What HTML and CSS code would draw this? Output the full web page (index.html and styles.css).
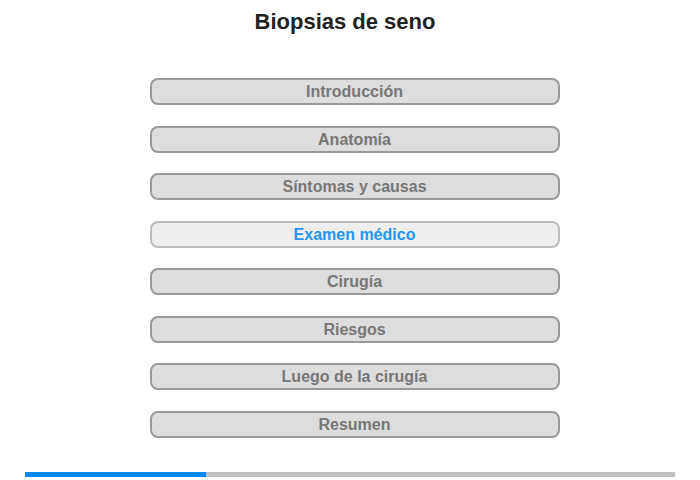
FILE: index.html
```html
<!DOCTYPE html>
<html lang="es">
<head>
    <meta charset="UTF-8">
    <meta name="viewport" content="width=device-width, initial-scale=1.0">
    <title>Biopsias de seno</title>
    <link rel="stylesheet" href="styles.css">
</head>
<body>
    <div class="page">
        <h1 class="title">Biopsias de seno</h1>
        <div class="menu">
            <div class="menu-item">Introducción</div>
            <div class="menu-item">Anatomía</div>
            <div class="menu-item">Síntomas y causas</div>
            <div class="menu-item active">Examen médico</div>
            <div class="menu-item">Cirugía</div>
            <div class="menu-item">Riesgos</div>
            <div class="menu-item">Luego de la cirugía</div>
            <div class="menu-item">Resumen</div>
        </div>
        <div class="progress">
            <div class="progress-fill" style="width: 181px;"></div>
        </div>
    </div>
</body>
</html>
```

FILE: styles.css
```css
body {
    margin: 0;
    padding: 0;
    font-family: "Liberation Sans", Arial, sans-serif;
    background: #fff;
}
.page {
    width: 700px;
    height: 480px;
    display: flex;
    flex-direction: column;
    align-items: center;
}
.title {
    margin: 0 10px 0 0;
    padding-top: 9px;
    font-size: 22px;
    line-height: 26px;
    font-weight: bold;
    color: #222;
}
.menu {
    margin: 43px 0 0 9px;
    display: flex;
    flex-direction: column;
    gap: 20.5px;
}
.menu-item {
    box-sizing: border-box;
    width: 410px;
    height: 27px;
    border: 2px solid #999;
    border-radius: 8px;
    background-color: #ddd;
    color: #777;
    font-size: 16px;
    font-weight: bold;
    line-height: 23px;
    text-align: center;
}
.menu-item.active {
    background-color: #eee;
    border-color: #bbb;
    color: #2196f3;
}
.progress {
    margin-top: 34px;
    width: 650px;
    height: 5px;
    background-color: #c0c0c0;
}
.progress-fill {
    height: 100%;
    background-color: #0088ff;
}
```
